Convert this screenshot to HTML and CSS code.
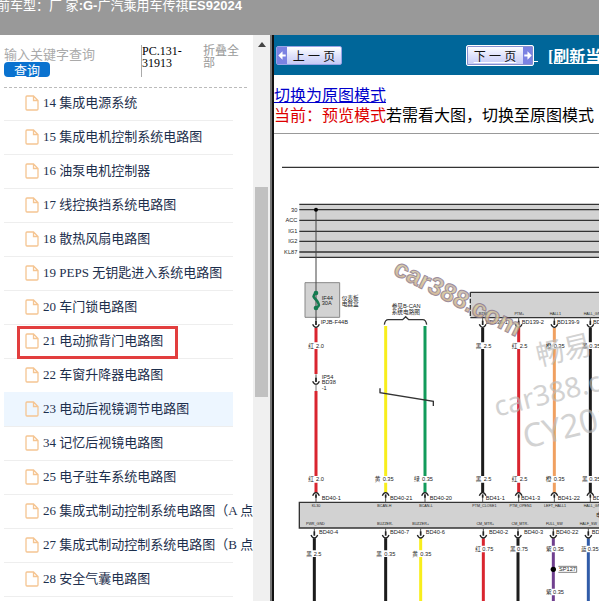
FILE: index.html
```
<!DOCTYPE html>
<html lang="zh-CN">
<head>
<meta charset="utf-8">
<title>ES92024</title>
<link rel="stylesheet" href="styles.css">
</head>
<body>
<header class="title-bar"><span>前车型：厂&nbsp;家</span><b>:G-</b><span>广汽乘用车传祺</span><b>ES92024</b></header>
<div class="workspace">
  <aside class="sidebar">
    <div class="tree-pane">
      <div class="tools">
        <form class="search">
          <input class="search-input" type="text" aria-label="输入关键字查询" placeholder="输入关键字查询">
          <button class="search-button" type="button">查询</button>
        </form>
        <div class="code">PC.131-31913</div>
        <a class="collapse" href="#">折叠全部</a>
      </div>
      <ul class="tree">
        <li><svg class="file"><use href="#file"/></svg><a href="#">14 集成电源系统</a></li>
        <li><svg class="file"><use href="#file"/></svg><a href="#">15 集成电机控制系统电路图</a></li>
        <li><svg class="file"><use href="#file"/></svg><a href="#">16 油泵电机控制器</a></li>
        <li><svg class="file"><use href="#file"/></svg><a href="#">17 线控换挡系统电路图</a></li>
        <li><svg class="file"><use href="#file"/></svg><a href="#">18 散热风扇电路图</a></li>
        <li><svg class="file"><use href="#file"/></svg><a href="#">19 PEPS 无钥匙进入系统电路图</a></li>
        <li><svg class="file"><use href="#file"/></svg><a href="#">20 车门锁电路图</a></li>
        <li class="marked"><svg class="file"><use href="#file"/></svg><a href="#">21 电动掀背门电路图</a></li>
        <li><svg class="file"><use href="#file"/></svg><a href="#">22 车窗升降器电路图</a></li>
        <li class="active"><svg class="file"><use href="#file"/></svg><a href="#">23 电动后视镜调节电路图</a></li>
        <li><svg class="file"><use href="#file"/></svg><a href="#">34 记忆后视镜电路图</a></li>
        <li><svg class="file"><use href="#file"/></svg><a href="#">25 电子驻车系统电路图</a></li>
        <li><svg class="file"><use href="#file"/></svg><a href="#">26 集成式制动控制系统电路图（A 点</a></li>
        <li><svg class="file"><use href="#file"/></svg><a href="#">27 集成式制动控制系统电路图（B 点</a></li>
        <li><svg class="file"><use href="#file"/></svg><a href="#">28 安全气囊电路图</a></li>
        <li></li>
      </ul>
    </div>
    <div class="scrollbar"><svg class="scroll-arrow" viewBox="0 0 8 5"><path d="M0 5 4 0 8 5z"/></svg><div class="thumb"></div></div>
  </aside>
  <main class="viewer">
    <nav class="pager">
      <button class="page-button" type="button"><svg class="arrow" viewBox="0 0 9 16"><path d="M1 8 5 4V7H8V9H5V12z"/></svg><span>上 一 页</span></button>
      <a class="next-link" href="#"><span class="page-button framed"><span>下 一 页</span><svg class="arrow" viewBox="0 0 9 16"><path d="M8 8 4 4V7H1V9H4V12z"/></svg></span>&nbsp;</a>
      <a class="refresh" href="#">[刷新当前页]</a>
    </nav>
    <div class="notice">
      <a href="#">切换为原图模式</a>
      <p><span class="mode">当前：预览模式</span>若需看大图，切换至原图模式</p>
    </div>
    <svg class="diagram" viewBox="12 402 975 1401" preserveAspectRatio="xMinYMin meet">
      <defs>
        <symbol id="file" viewBox="0 0 14 16"><path d="M2 1H8.500L13 5.500V14Q13 15 12 15H2Q1 15 1 14V2Q1 1 2 1zM8.500 1V5.500H13" fill="none" stroke="#f5c592" stroke-width="1.300"/></symbol>
        <g id="down"><path d="M0-30V-8" stroke="#555" stroke-width="3"/><path d="M0-20V-7" stroke="#222" stroke-width="5"/><path d="M-10-9Q-6 0 0 0T10-9" fill="none" stroke="#222" stroke-width="4"/></g>
        <g id="up"><path d="M0 30V8" stroke="#555" stroke-width="3"/><path d="M0 16V6" stroke="#222" stroke-width="5"/><path d="M-10 10Q-6 1 0 1T10 10" fill="none" stroke="#222" stroke-width="4"/></g>
        <linearGradient id="tint" x1="0" y1="0" x2="0" y2="1"><stop offset="0" stop-color="#b3a4b4"/><stop offset=".5" stop-color="#d8cb98"/><stop offset="1" stop-color="#c49a80"/></linearGradient>
      </defs>

      <path d="M36 502H987" class="line"/>

      <path d="M88 613H987V773H88z" class="panel"/>
      <path d="M88 613H987M88 629H987M88 661H987M88 694H987M88 724H987M88 756H987M88 772H987" class="line"/>
      <g class="label end"><text x="82" y="636">30</text><text x="82" y="667">ACC</text><text x="82" y="699">IG1</text><text x="82" y="730">IG2</text><text x="82" y="762">KL87</text></g>

      <path d="M105 848H209V952H105z" class="panel" stroke="#888" stroke-width="3"/>
      <path d="M138 629V960" stroke="#444" stroke-width="3"/>
      <circle cx="138" cy="629" r="6"/>
      <path d="M138 878C122 892 136 894 142 904S150 918 138 924" fill="none" stroke="#147a50" stroke-width="8"/>
      <circle cx="138" cy="879" r="7" fill="#147a50"/><circle cx="138" cy="924" r="7" fill="#147a50"/>
      <g class="label"><text x="155" y="899">IF44</text><text x="155" y="916">30A</text><text x="215" y="899">仪表板</text><text x="215" y="919">电器盒</text><text x="152" y="973">IPJB-F44B</text><text x="365" y="923">参见B-CAN</text><text x="365" y="943">系统电路图</text><text x="155" y="1137">IP54</text><text x="155" y="1153">BD38</text><text x="155" y="1169">-1</text></g>
      <path d="M343 974Q345 959 355 959H398L407 950 416 959H458Q468 959 470 974" class="line" fill="none"/>

      <path d="M601 877H987V953H601z" class="panel"/>
      <path d="M601 877H987M601 953H987" class="line"/>
      <path d="M601 877V953" class="line" stroke-dasharray="14 5"/>
      <path d="M88 1507H987V1584H88z" class="panel"/>
      <path d="M987 1507H88V1584H987" class="line" fill="none"/>

      <g class="wire">
        <g stroke="#d9252f"><path d="M138 984V1122M138 1173V1478"/><path d="M746 984V1478"/><path d="M640 1615V1803"/></g>
        <g stroke="#f8ee1c"><path d="M347 978V1478"/><path d="M452 1615V1803"/></g>
        <path d="M465 978V1478" stroke="#129b5b"/>
        <path d="M853 984V1478" stroke="#f0a060"/>
        <path d="M638 984V1478M961 984V1478M133 1615V1803M347 1615V1803M744 1615V1803" stroke="#1c1c1c"/>
        <path d="M850 1615V1803" stroke="#70408f"/>
        <path d="M955 1615V1803" stroke="#315ca8"/>
      </g>
      <path d="M330 1165V1178L490 1204V1218" class="line" fill="none"/>

      <use href="#down" x="138" y="982"/><use href="#down" x="138" y="1153"/><path d="M138 1153V1173" stroke="#777" stroke-width="3"/>
      <use href="#down" x="638" y="982"/><use href="#down" x="746" y="982"/><use href="#down" x="853" y="982"/><use href="#down" x="961" y="982"/>
      <use href="#up" x="138" y="1477"/><use href="#up" x="347" y="1477"/><use href="#up" x="465" y="1477"/><use href="#up" x="638" y="1477"/><use href="#up" x="746" y="1477"/><use href="#up" x="853" y="1477"/><use href="#up" x="961" y="1477"/>
      <use href="#down" x="133" y="1614"/><use href="#down" x="347" y="1614"/><use href="#down" x="452" y="1614"/><use href="#down" x="640" y="1614"/><use href="#down" x="744" y="1614"/><use href="#down" x="850" y="1614"/><use href="#down" x="955" y="1614"/>

      <path fill="#fff" d="M130 1027h32v20h-32zM630 1027h32v20h-32zM738 1027h32v20h-32zM845 1027h32v20h-32zM953 1027h32v20h-32zM130 1428h32v20h-32zM339 1428h32v20h-32zM457 1428h32v20h-32zM630 1428h32v20h-32zM738 1428h32v20h-32zM845 1428h32v20h-32zM953 1428h32v20h-32zM125 1651h32v20h-32zM339 1651h32v20h-32zM444 1651h32v20h-32zM632 1637h32v20h-32zM736 1637h32v20h-32zM842 1637h32v20h-32zM947 1637h32v20h-32zM842 1766h32v20h-32z"/>
      <g class="label">
        <text x="115" y="1043">红</text><text x="138" y="1043">2.0</text>
        <text x="617" y="1043">黑</text><text x="641" y="1043">2.5</text>
        <text x="725" y="1043">红</text><text x="749" y="1043">2.5</text>
        <text x="827" y="1043">橙</text><text x="851" y="1043">0.35</text>
        <text x="936" y="1043">黑</text><text x="958" y="1043">0.35</text>
        <text x="115" y="1444">红</text><text x="138" y="1444">2.0</text>
        <text x="314" y="1444">黄</text><text x="338" y="1444">0.35</text>
        <text x="432" y="1444">绿</text><text x="456" y="1444">0.35</text>
        <text x="617" y="1444">黑</text><text x="641" y="1444">2.5</text>
        <text x="725" y="1444">红</text><text x="749" y="1444">2.5</text>
        <text x="827" y="1444">橙</text><text x="851" y="1444">0.35</text>
        <text x="936" y="1444">黑</text><text x="958" y="1444">0.35</text>
        <text x="109" y="1667">黑</text><text x="131" y="1667">2.5</text>
        <text x="319" y="1667">黑</text><text x="343" y="1667">0.35</text>
        <text x="427" y="1667">黄</text><text x="451" y="1667">0.35</text>
        <text x="616" y="1653">红</text><text x="637" y="1653">0.75</text>
        <text x="720" y="1653">黑</text><text x="741" y="1653">0.75</text>
        <text x="828" y="1653">紫</text><text x="849" y="1653">0.35</text>
        <text x="933" y="1653">蓝</text><text x="953" y="1653">0.35</text>
        <text x="828" y="1782">紫</text><text x="849" y="1782">0.35</text>
        <text x="647" y="972">BD139-1</text><text x="755" y="972">BD139-2</text><text x="861" y="972">BD139-9</text><text x="969" y="972">BD139-8</text>
        <text x="155" y="1500">BD40-1</text><text x="360" y="1500">BD40-21</text><text x="479" y="1500">BD40-20</text><text x="647" y="1500">BD41-1</text><text x="753" y="1500">BD41-3</text><text x="863" y="1500">BD41-22</text><text x="968" y="1500">BD41-9</text>
        <text x="147" y="1602">BD40-4</text><text x="360" y="1602">BD40-7</text><text x="467" y="1602">BD40-6</text><text x="657" y="1602">BD40-2</text><text x="762" y="1602">BD40-3</text><text x="858" y="1602">BD40-22</text><text x="965" y="1602">BD40-9</text>
        <text x="867" y="1714">SP127</text><text x="978" y="1551">电</text>
      </g>
      <path d="M865 1699H920V1717H865" fill="none" stroke="#444" stroke-width="2"/>
      <circle cx="850" cy="1708" r="8"/>
      <g class="pin">
        <text x="640" y="944">PTM-</text><text x="748" y="944">PTM+</text><text x="856" y="944">HALL1</text><text x="970" y="944">HALL_GND</text>
        <text x="138" y="1522">KL30</text><text x="343" y="1522">BCAN-H</text><text x="468" y="1522">BCAN-L</text><text x="643" y="1522">PTM_CLOSE1</text><text x="752" y="1522">PTM_OPEN1</text><text x="855" y="1522">LEFT_HALL1</text><text x="970" y="1522">HALL_GND</text>
        <text x="136" y="1576">PWR_GND</text><text x="345" y="1576">BUZZER-</text><text x="452" y="1576">BUZZER+</text><text x="646" y="1576">CM_MTR+</text><text x="750" y="1576">CM_MTR-</text><text x="853" y="1576">FULL_SW</text><text x="955" y="1576">HALF_SW</text>
      </g>
      <text class="brand" transform="translate(366 821) rotate(27)">car388.com</text>
      <g class="watermark">
        <text transform="translate(806 1098) rotate(-13)">畅易</text>
        <text transform="translate(680 1250) rotate(-14)">car388.com</text>
        <text class="large" transform="translate(768 1346) rotate(-14)">CY2019</text>
      </g>
    </svg>
  </main>
</div>
</body>
</html>
```
FILE: styles.css
```
*, *::after { box-sizing: border-box; }
body {
  margin: 0;
  height: 100vh;
  display: flex;
  flex-direction: column;
  overflow: hidden;
  font-family: "Liberation Serif", "Noto Sans CJK SC", serif;
  font-size: 13px;
  background: #fff;
}
.title-bar {
  flex: none;
  height: 35px;
  margin-left: -3px;
  background: #999;
  color: #fff;
  line-height: 12px;
  white-space: nowrap;
  font-family: "Liberation Sans", "Noto Sans CJK SC", sans-serif;
}
.workspace { flex: 1; min-height: 0; display: flex; }
.sidebar { flex: none; width: 274px; display: flex; border-right: 2px solid #111; }
.tree-pane { flex: 1; min-width: 0; overflow: hidden; padding-left: 4px; }
.tools {
  display: flex;
  align-items: flex-start;
  height: 53px;
  margin-right: 6px;
  padding-top: 10px;
  border-bottom: 1px dashed #bbb;
}
.search { width: 137px; padding-top: 2px; }
.search-input {
  display: block;
  width: 100%;
  height: 15px;
  padding: 0;
  border: 0;
  background: none;
  font: 13px "Liberation Sans", "Noto Sans CJK SC", sans-serif;
}
.search-input::placeholder { color: #aaa; }
.search-button {
  display: block;
  width: 46px;
  height: 15px;
  padding: 0;
  border: 0;
  border-radius: 4px;
  background: #0a72cf;
  color: #fff;
  font-family: "Noto Sans CJK SC", sans-serif;
  font-size: 13px;
  line-height: 14px;
}
.code {
  width: 48px;
  height: 32px;
  border-left: 1px solid #aaa;
  font-size: 12px;
  line-height: 12px;
}
.collapse {
  width: 38px;
  margin-left: 14px;
  color: #999;
  font-size: 12px;
  line-height: 12px;
  text-decoration: none;
}
.tree { list-style: none; margin: 0 20px 0 0; padding: 0; }
.tree li {
  position: relative;
  display: flex;
  align-items: center;
  gap: 4px;
  height: 34px;
  padding: 0 0 2px 21px;
  border-top: 1px solid #eee;
  white-space: nowrap;
}
.tree li:first-child { height: 32px; border-top: 0; }
.tree li.active { background: #edf6ff; border-color: #edf6ff; }
.tree a { color: #1d2f4d; line-height: 20px; text-decoration: none; }
.file { flex: none; width: 14px; height: 16px; }
.marked::after {
  content: "";
  position: absolute;
  left: 13px;
  top: 1px;
  width: 161px;
  height: 33px;
  border: 3px solid #e23e3e;
  z-index: 1;
}
.scrollbar { flex: none; width: 19px; background: #f0f0f0; border-right: 2px solid #777; }
.scroll-arrow { display: block; width: 8px; height: 5px; margin: 7px 4px 0 5px; fill: #444; }
.thumb { height: 210px; margin: 140px 2px 0; background: #c1c1c1; }
.viewer { flex: 1; min-width: 0; overflow: hidden; }
.pager {
  display: flex;
  align-items: center;
  height: 40px;
  padding-left: 2px;
  background: #069;
  white-space: nowrap;
}
.page-button {
  display: inline-flex;
  flex: none;
  align-items: center;
  justify-content: space-between;
  width: 66px;
  height: 19px;
  padding: 0;
  border: 1px solid #9aa3e6;
  border-radius: 2px;
  background: linear-gradient(#fff, #dfe2fb 50%, #c6caf6);
  color: #111;
  font: 12px "Liberation Sans", "Noto Sans CJK SC", sans-serif;
}
.page-button > span { flex: 1; text-align: center; }
.arrow { flex: none; width: 10px; height: 17px; background: #7b82e2; fill: #fff; }
.framed { height: 21px; width: 68px; border: 1px solid #fff; outline: 1px solid #8790cf; outline-offset: -2px; }
.next-link { flex: none; display: flex; align-items: center; margin-left: 124px; color: #fff; font-size: 16px; }
.refresh { margin-left: 10px; color: #fff; font-size: 16px; font-weight: bold; }
.notice {
  padding: 11px 0 8px;
  border-bottom: 1px solid #999;
  font-size: 16px;
  line-height: 20px;
  white-space: nowrap;
}
.notice a { display: block; color: #00c; }
.notice p { margin: 0; line-height: 19px; }
.mode { color: #d00; }
.diagram { display: block; width: 100%; min-width: 325px; }
.line { stroke: #333; stroke-width: 4; fill: none; }
.panel { fill: #d2d2d2; }
.wire { fill: none; stroke-width: 9; }
.label { font: 17px "Liberation Sans", "Noto Sans CJK SC", sans-serif; fill: #222; }
.end { text-anchor: end; }
.pin { font: 11px "Liberation Sans", sans-serif; fill: #222; text-anchor: middle; }
.brand {
  font: bold 76px "Liberation Sans", sans-serif;
  fill: url(#tint);
  stroke: #8d7a8c;
  stroke-width: 3;
  opacity: .85;
}
.watermark { font: 84px "Noto Sans", "Noto Sans CJK SC", sans-serif; fill: #bbb; opacity: .65; }
.large { font-size: 98px; }
```
